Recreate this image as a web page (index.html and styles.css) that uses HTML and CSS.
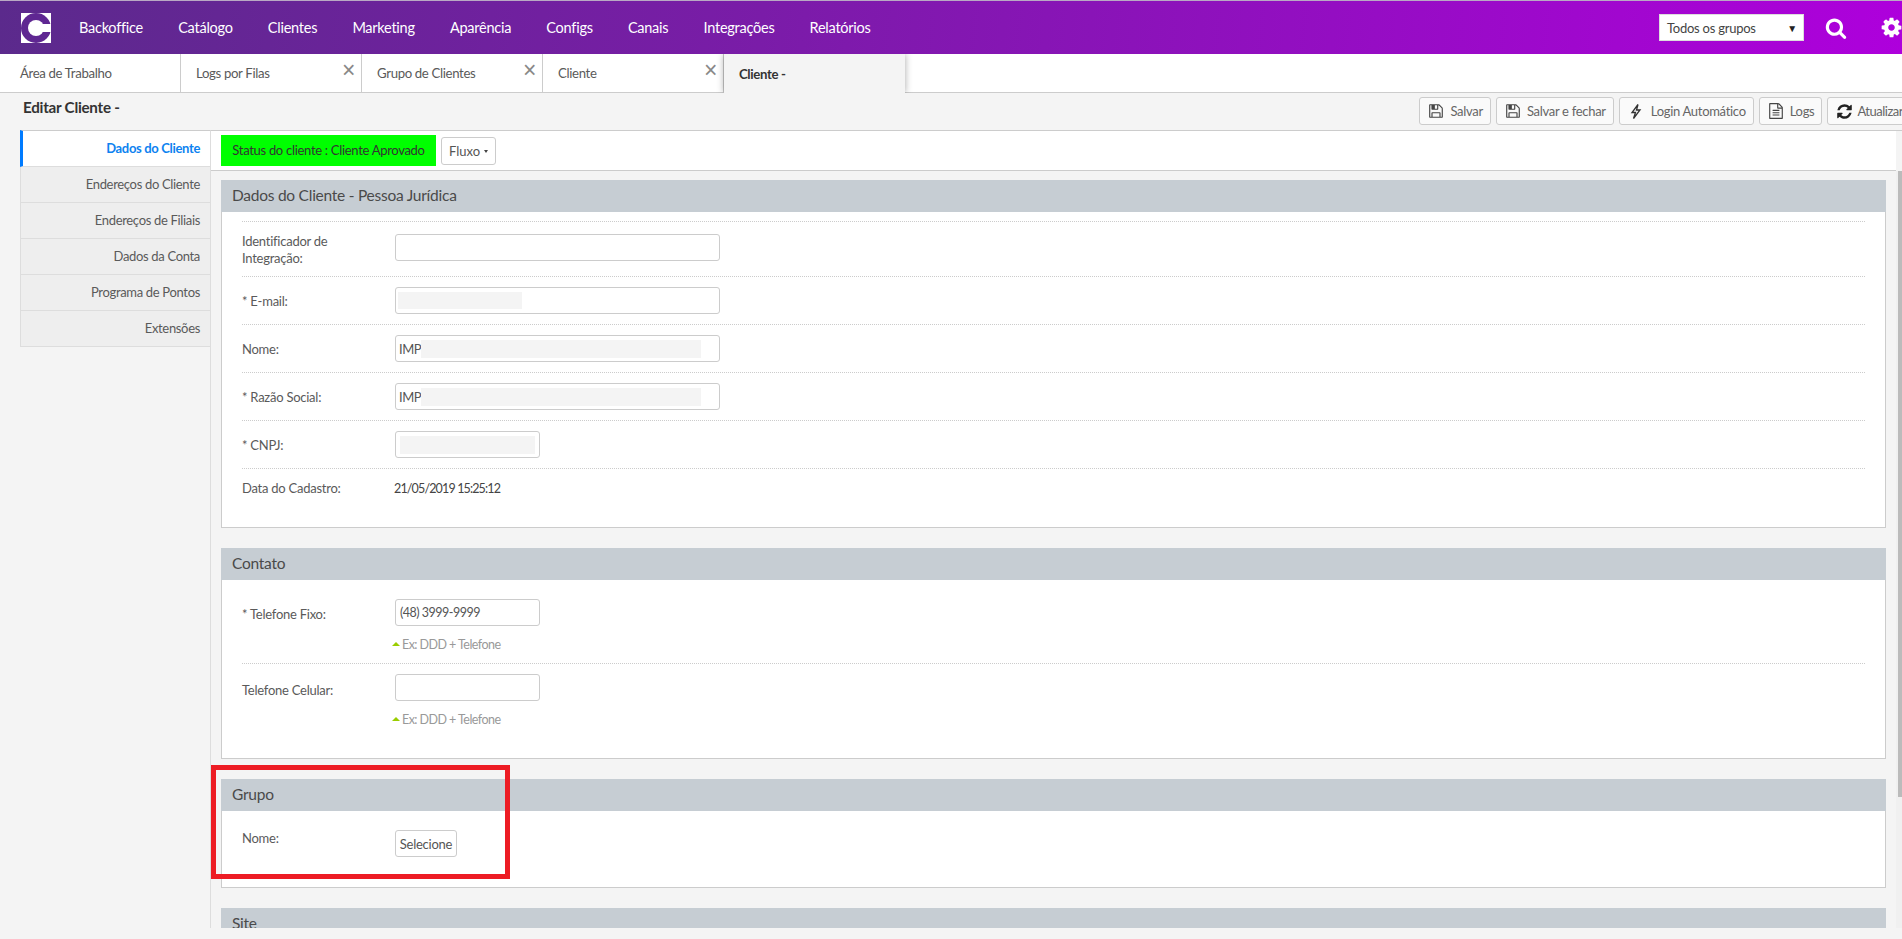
FILE: index.html
```html
<!DOCTYPE html>
<html lang="pt-BR">
<head>
<meta charset="utf-8">
<title>Editar Cliente</title>
<link rel="stylesheet" href="styles.css">
</head>
<body>
<svg class="defs" width="0" height="0" aria-hidden="true">
  <symbol id="i-save" viewBox="0 0 1792 1792"><path d="M512 1536h768v-384h-768v384zm896 0h128v-896q0-14-10-38.500t-20-34.500l-281-281q-10-10-34-20t-39-10v416q0 40-28 68t-68 28h-576q-40 0-68-28t-28-68v-416h-128v1280h128v-416q0-40 28-68t68-28h832q40 0 68 28t28 68v416zm-384-928v-320q0-13-9.500-22.500t-22.500-9.500h-192q-13 0-22.500 9.500t-9.500 22.500v320q0 13 9.500 22.500t22.500 9.500h192q13 0 22.500-9.500t9.500-22.500zm640 32v928q0 40-28 68t-68 28h-1344q-40 0-68-28t-28-68v-1344q0-40 28-68t68-28h928q40 0 88 20t76 48l280 280q28 28 48 76t20 88z"/></symbol>
  <symbol id="i-file" viewBox="0 0 1792 1792"><path d="M1596 380q28 28 48 76t20 88v1152q0 40-28 68t-68 28h-1344q-40 0-68-28t-28-68v-1600q0-40 28-68t68-28h896q40 0 88 20t76 48zm-444-244v376h376q-10-29-22-41l-313-313q-12-12-41-22zm384 1528v-1024h-416q-40 0-68-28t-28-68v-416h-768v1536h1280zm-1024-864q0-14 9-23t23-9h704q14 0 23 9t9 23v64q0 14-9 23t-23 9h-704q-14 0-23-9t-9-23v-64zm736 224q14 0 23 9t9 23v64q0 14-9 23t-23 9h-704q-14 0-23-9t-9-23v-64q0-14 9-23t23-9h704zm0 256q14 0 23 9t9 23v64q0 14-9 23t-23 9h-704q-14 0-23-9t-9-23v-64q0-14 9-23t23-9h704z"/></symbol>
  <symbol id="i-sync" viewBox="0 0 1792 1792"><path d="M1639 1056q0 5-1 7-64 268-268 434.500t-478 166.500q-146 0-282.500-55t-243.500-157l-129 129q-19 19-45 19t-45-19-19-45v-448q0-26 19-45t45-19h448q26 0 45 19t19 45-19 45l-137 137q71 66 161 102t187 36q134 0 250-65t186-179q11-17 53-117 8-23 30-23h192q13 0 22.500 9.500t9.500 22.500zm25-800v448q0 26-19 45t-45 19h-448q-26 0-45-19t-19-45 19-45l138-138q-148-137-349-137-134 0-250 65t-186 179q-11 17-53 117-8 23-30 23h-199q-13 0-22.500-9.500t-9.500-22.500v-7q65-268 270-434.500t480-166.500q146 0 284 55.500t245 156.500l130-129q19-19 45-19t45 19 19 45z"/></symbol>
  <symbol id="i-search" viewBox="0 0 1792 1792"><path d="M1216 832q0-185-131.500-316.500t-316.500-131.500-316.500 131.500-131.500 316.500 131.500 316.500 316.500 131.500 316.500-131.500 131.500-316.500zm512 832q0 52-38 90t-90 38q-54 0-90-38l-343-342q-179 124-399 124-143 0-273.500-55.500t-225-150-150-225-55.500-273.500 55.500-273.500 150-225 225-150 273.500-55.500 273.500 55.500 225 150 150 225 55.500 273.500q0 220-124 399l343 343q37 37 37 90z"/></symbol>
  <symbol id="i-cog" viewBox="0 0 1792 1792"><path d="M1152 896q0-106-75-181t-181-75-181 75-75 181 75 181 181 75 181-75 75-181zm512-109v222q0 12-8 23t-20 13l-185 28q-19 54-39 91 35 50 107 138 10 12 10 25t-9 23q-27 37-99 108t-94 71q-12 0-26-9l-138-108q-44 23-91 38-16 136-29 186-7 28-36 28h-222q-14 0-24.500-8.500t-11.500-21.500l-28-184q-49-16-90-37l-141 107q-10 9-25 9-14 0-25-11-126-114-165-168-7-10-7-23 0-12 8-23 15-21 51-66.500t54-70.500q-27-50-41-99l-183-27q-13-2-21-12.500t-8-23.500v-222q0-12 8-23t19-13l186-28q14-46 39-92-40-57-107-138-10-12-10-24 0-10 9-23 26-36 98.500-107.500t94.500-71.500q13 0 26 10l138 107q44-23 91-38 16-136 29-186 7-28 36-28h222q14 0 24.500 8.500t11.500 21.500l28 184q49 16 90 37l142-107q9-9 24-9 13 0 25 10 129 119 165 170 7 8 7 22 0 12-8 23-15 21-51 66.500t-54 70.500q26 50 41 98l183 28q13 2 21 12.500t8 23.500z"/></symbol>
</svg>

<header class="topbar">
  <svg class="logo" viewBox="0 0 30 30" aria-label="Logo">
    <rect width="30" height="30" fill="#fff"/>
    <circle cx="15" cy="15" r="15" fill="#5f2792"/>
    <circle cx="15" cy="15" r="8" fill="#fff"/>
    <rect x="15" y="11" width="15" height="8" fill="#fff"/>
  </svg>
  <nav class="mainnav">
    <a>Backoffice</a><a>Catálogo</a><a>Clientes</a><a>Marketing</a><a>Aparência</a><a>Configs</a><a>Canais</a><a>Integrações</a><a>Relatórios</a>
  </nav>
  <div class="group-select"><span>Todos os grupos</span><span class="select-arrow">▼</span></div>
  <svg class="top-icon search-icon"><use href="#i-search"/></svg>
  <svg class="top-icon cog-icon"><use href="#i-cog"/></svg>
</header>

<div class="tabs">
  <div class="tab">Área de Trabalho</div>
  <div class="tab">Logs por Filas<span class="tab-close">×</span></div>
  <div class="tab">Grupo de Clientes<span class="tab-close">×</span></div>
  <div class="tab">Cliente<span class="tab-close">×</span></div>
  <div class="tab tab-active">Cliente -</div>
</div>

<div class="titlebar">
  <h1 class="page-title">Editar Cliente -</h1>
  <div class="actions">
    <button class="btn"><svg class="btn-icon"><use href="#i-save"/></svg>Salvar</button>
    <button class="btn"><svg class="btn-icon"><use href="#i-save"/></svg>Salvar e fechar</button>
    <button class="btn"><svg class="btn-icon bolt" viewBox="0 0 12 16"><path d="M8 1 2 9h3.500L3.500 15 10 6.500H6.500L8 1Z"/></svg>Login Automático</button>
    <button class="btn"><svg class="btn-icon"><use href="#i-file"/></svg>Logs</button>
    <button class="btn btn-last"><svg class="btn-icon sync"><use href="#i-sync"/></svg>Atualizar</button>
  </div>
</div>

<div class="workspace">
  <aside class="sidemenu">
    <a class="side-item side-active">Dados do Cliente</a>
    <a class="side-item">Endereços do Cliente</a>
    <a class="side-item">Endereços de Filiais</a>
    <a class="side-item">Dados da Conta</a>
    <a class="side-item">Programa de Pontos</a>
    <a class="side-item">Extensões</a>
  </aside>

  <main class="content">
    <div class="statusbar">
      <div class="status">Status do cliente : Cliente Aprovado</div>
      <button class="flux">Fluxo<span class="caret"></span></button>
    </div>
    <div class="scroller">
      <div class="panels">
        <section class="panel">
          <h2 class="panel-head">Dados do Cliente - Pessoa Jurídica</h2>
          <div class="panel-body body-first">
            <div class="row row-tall">
              <label class="label label-two">Identificador de Integração:</label>
              <div class="field field-lg"></div>
            </div>
            <div class="row">
              <label class="label">* E-mail:</label>
              <div class="field field-lg"><span class="redact redact-email"></span></div>
            </div>
            <div class="row">
              <label class="label">Nome:</label>
              <div class="field field-lg field-named">IMP<span class="redact redact-name"></span></div>
            </div>
            <div class="row">
              <label class="label">* Razão Social:</label>
              <div class="field field-lg field-named">IMP<span class="redact redact-name"></span></div>
            </div>
            <div class="row">
              <label class="label">* CNPJ:</label>
              <div class="field field-sm"><span class="redact redact-cnpj"></span></div>
            </div>
            <div class="row row-plain row-date">
              <label class="label label-flat">Data do Cadastro:</label>
              <div class="value">21/05/2019 15:25:12</div>
            </div>
          </div>
        </section>

        <section class="panel">
          <h2 class="panel-head">Contato</h2>
          <div class="panel-body body-contact">
            <div class="row row-hint row-phone1">
              <label class="label">* Telefone Fixo:</label>
              <div>
                <div class="field field-sm field-phone">(48) 3999-9999</div>
                <p class="hint">Ex: DDD + Telefone</p>
              </div>
            </div>
            <div class="row row-plain row-hint row-phone2">
              <label class="label">Telefone Celular:</label>
              <div>
                <div class="field field-sm"></div>
                <p class="hint">Ex: DDD + Telefone</p>
              </div>
            </div>
          </div>
        </section>

        <section class="panel panel-marked">
          <h2 class="panel-head">Grupo</h2>
          <div class="panel-body body-group">
            <div class="row row-plain row-group">
              <label class="label label-flat">Nome:</label>
              <div class="field field-btn">Selecione</div>
            </div>
          </div>
          <div class="highlight"></div>
        </section>

        <section class="panel">
          <h2 class="panel-head">Site</h2>
        </section>
      </div>
      <div class="scrollbar"><span class="scroll-arrow"></span><span class="scroll-thumb"></span></div>
    </div>
  </main>
</div>
</body>
</html>
```

FILE: styles.css
```css
* { box-sizing: border-box; }
html, body { margin: 0; height: 939px; overflow: hidden; }
body {
  background: #f4f4f4;
  color: #5a5a5a;
  font-family: "Lato", "Liberation Sans", sans-serif;
  font-size: 13px;
  letter-spacing: -0.25px;
}
.defs { position: absolute; }

.topbar {
  height: 54px;
  display: flex;
  align-items: center;
  border-top: 1px solid #b9a9c4;
  background: linear-gradient(95deg, #5b2a8c 0%, #7a1ca8 40%, #ae00dc 100%);
  padding-left: 21px;
  overflow: hidden;
}
.logo { width: 30px; height: 30px; flex: none; margin-top: 1px; overflow: hidden; }
.mainnav {
  display: flex;
  gap: 35.200px;
  margin-left: 28px;
  flex: 1;
  color: #fff;
  font-size: 14.5px;
}
.group-select {
  width: 145px;
  height: 27px;
  flex: none;
  display: flex;
  align-items: center;
  justify-content: space-between;
  padding: 0 6px 0 7px;
  background: #fff;
  color: #444;
  font-size: 13px;
  border: 1px solid #ddd;
}
.select-arrow { font-size: 10px; color: #222; }
.top-icon { flex: none; fill: #fff; }
.search-icon { width: 22px; height: 22px; margin-left: 21px; }
.cog-icon { width: 23px; height: 23px; margin-left: 33px; margin-right: -1px; }

.tabs {
  height: 39px;
  display: flex;
  background: #fff;
  border-bottom: 1px solid #ccc;
}
.tab {
  position: relative;
  width: 181px;
  display: flex;
  align-items: center;
  padding: 0 0 0 15px;
  border-right: 1px solid #ccc;
  font-size: 13.2px;
  letter-spacing: -0.35px;
}
.tab:first-child { padding-left: 20px; }
.tab-close {
  position: absolute;
  right: 6px;
  top: 4px;
  color: #888;
  font-size: 23px;
  line-height: 24px;
  font-family: "Liberation Sans", sans-serif;
  font-weight: 400;
}
.tab-active {
  width: 181px;
  height: 39px;
  background: #f4f4f4;
  border-right: 0;
  color: #333;
  font-weight: 700;
  box-shadow: 0 0 7px rgba(0, 0, 0, .35);
  clip-path: inset(0 -10px 0 -10px);
}

.titlebar {
  height: 37px;
  display: flex;
  justify-content: space-between;
  align-items: flex-start;
}
.page-title {
  margin: 4px 0 0 23px;
  font-size: 15.200px;
  line-height: 20px;
  font-weight: 700;
  color: #333;
}
.actions { display: flex; gap: 5px; margin-top: 4px; margin-right: -9px; }
.btn {
  height: 28px;
  display: flex;
  align-items: center;
  padding: 0 7px 0 8px;
  background: #fafafa;
  border: 1px solid #ccc;
  border-radius: 3px;
  color: #666;
  font: inherit;
  font-size: 13px;
  letter-spacing: -0.3px;
  white-space: nowrap;
}
.btn-icon { width: 16px; height: 16px; margin-right: 6px; fill: #444; flex: none; }
.bolt { width: 12px; height: 17px; margin: 0 9px 0 2px; fill: none; stroke: #333; stroke-width: 1.300; }
.sync { width: 17px; height: 17px; margin-right: 4px; fill: #222; }
.btn-last { letter-spacing: -0.5px; }

.workspace { height: 798px; display: flex; padding-left: 20px; }
.sidemenu { width: 190px; flex: none; }
.side-item {
  display: block;
  height: 36px;
  line-height: 35px;
  padding-right: 10px;
  text-align: right;
  background: #eee;
  border-left: 1px solid #ddd;
  border-bottom: 1px solid #ddd;
  font-size: 13px;
  letter-spacing: -0.33px;
}
.side-active {
  height: 37px;
  line-height: 34px;
  background: #fff;
  border-top: 1px solid #ccc;
  border-left: 3px solid #007bff;
  border-bottom-color: #ddd;
  color: #0d82f0;
  font-weight: 700;
}

.content {
  flex: 1;
  min-width: 0;
  display: flex;
  flex-direction: column;
  border-left: 1px solid #ddd;
  border-top: 1px solid #ccc;
}
.statusbar {
  height: 40px;
  flex: none;
  display: flex;
  align-items: flex-start;
  gap: 5px;
  padding: 4px 0 0 10px;
  margin-right: 6px;
  background: #fff;
  border-bottom: 1px solid #ccc;
}
.status {
  width: 215px;
  height: 31px;
  line-height: 31px;
  text-align: center;
  background: #0f0;
  color: #333;
  font-size: 13px;
  letter-spacing: -0.3px;
}
.flux {
  width: 55px;
  height: 28px;
  margin-top: 2px;
  display: flex;
  align-items: center;
  justify-content: center;
  gap: 4px;
  background: #fff;
  border: 1px solid #ccc;
  border-radius: 3px;
  color: #555;
  font: inherit;
  font-size: 13px;
}
.caret {
  width: 0;
  height: 0;
  border: 2.500px solid transparent;
  border-top: 3px solid #444;
  border-bottom: 0;
}

.scroller { flex: 1; min-height: 0; display: flex; overflow: hidden; position: relative; }
.panels { flex: 1; padding: 9px 10px 0; min-width: 0; }
.scrollbar {
  width: 6px;
  flex: none;
  margin-top: -41px;
  background: #f0f0f0;
  position: relative;
  z-index: 1;
  padding-left: 2px;
  display: flex;
  flex-direction: column;
}
.scroll-arrow { height: 17px; flex: none; }
.scroll-thumb { width: 4px; height: 650px; background: #bbb; }

.panel { position: relative; margin-bottom: 20px; }
.panel-head {
  height: 32px;
  margin: 0;
  padding-left: 11px;
  background: #c6cdd3;
  color: #4a4a4a;
  font-size: 15.5px;
  font-weight: 400;
  line-height: 31px;
}
.panel-body {
  background: #fff;
  border: 1px solid #ccc;
  border-top: 0;
  padding: 0 20px;
}
.body-first { height: 316px; padding-top: 9px; }
.body-contact { height: 179px; padding-top: 19px; }
.body-group { height: 77px; padding-top: 19px; }

.row {
  display: flex;
  align-items: flex-start;
  height: 48px;
  padding-top: 10px;
  border-bottom: 1px dotted #ccc;
}
.body-first .row:first-child { border-top: 1px dotted #ccc; height: 56px; padding-top: 12px; }
.row-plain { border-bottom: 0; }
.row-date { padding-top: 11px; }
.row-hint { height: 84px; }
.row-hint.row-phone1 { height: 65px; padding-top: 0; }
.row-group { height: auto; padding-top: 0; }

.label {
  width: 153px;
  flex: none;
  padding-top: 6px;
  line-height: 17px;
  font-size: 13px;
}
.label-two { padding-top: 0; margin-top: -1px; padding-right: 30px; }
.label-flat { padding-top: 0; }
.row-phone1 .label { padding-top: 7px; }
.row-phone2 .label { padding-top: 8px; }

.field {
  height: 27px;
  display: flex;
  align-items: center;
  padding: 0 4px;
  background: #fff;
  border: 1px solid #ccc;
  border-radius: 3px;
  color: #555;
  font-size: 13px;
}
.field-lg { width: 325px; }
.field-sm { width: 145px; }
.field-named { padding-left: 3px; letter-spacing: -0.5px; }
.field-phone { font-size: 12.5px; letter-spacing: -0.5px; }
.field-btn { width: 62px; justify-content: center; padding: 0; }
.redact { display: block; height: 18px; background: #f4f4f4; }
.redact-email { width: 124px; height: 17px; margin-left: -2px; }
.redact-name { width: 280px; }
.redact-cnpj { width: 136px; }
.value { margin-left: -1px; color: #444; font-size: 12.5px; letter-spacing: -0.85px; line-height: 17px; }

.hint {
  margin: 11px 0 0 -3px;
  color: #999;
  font-size: 12.5px;
  letter-spacing: -0.55px;
  line-height: 16px;
  display: flex;
  align-items: center;
  gap: 2px;
}
.hint::before {
  content: "";
  width: 0;
  height: 0;
  flex: none;
  margin-top: -2px;
  border-left: 4px solid transparent;
  border-right: 4px solid transparent;
  border-bottom: 4px solid #9acd00;
}

.highlight {
  position: absolute;
  left: -10px;
  top: -14px;
  width: 299px;
  height: 114px;
  border: 5px solid #ed1c24;
  pointer-events: none;
}
```
